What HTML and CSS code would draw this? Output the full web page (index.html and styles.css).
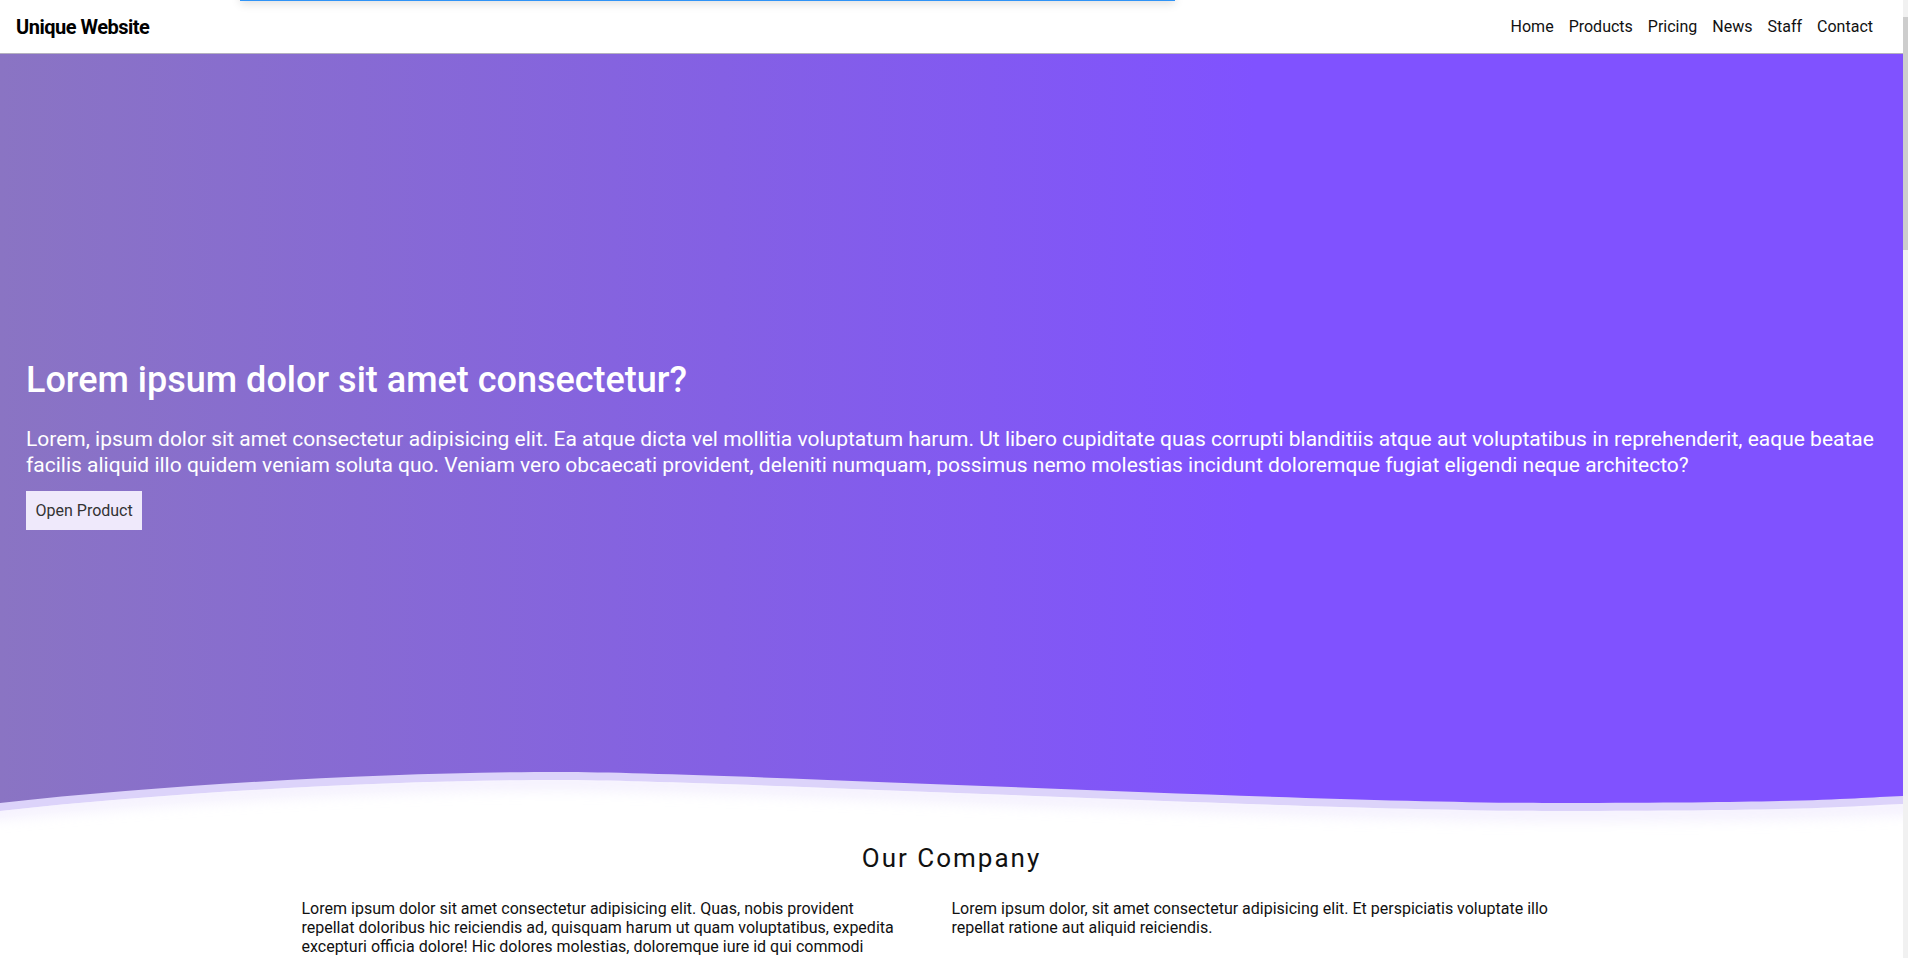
FILE: index.html
```html
<!DOCTYPE html>
<html lang="en">
<head>
<meta charset="utf-8">
<title>Unique Website</title>
<link rel="stylesheet" href="styles.css">
</head>
<body>
<div class="top-toast"></div>
<div class="fake-scrollbar"><div class="fake-thumb"></div></div>
<header class="site-header">
  <a class="logo" href="#">Unique Website</a>
  <nav class="main-nav">
    <a href="#">Home</a>
    <a href="#">Products</a>
    <a href="#">Pricing</a>
    <a href="#">News</a>
    <a href="#">Staff</a>
    <a href="#">Contact</a>
  </nav>
</header>

<section class="hero">
  <div class="hero-content">
    <h1>Lorem ipsum dolor sit amet consectetur?</h1>
    <p>Lorem, ipsum dolor sit amet consectetur adipisicing elit. Ea atque dicta vel mollitia voluptatum harum. Ut libero cupiditate quas corrupti blanditiis atque aut voluptatibus in reprehenderit, eaque beatae facilis aliquid illo quidem veniam soluta quo. Veniam vero obcaecati provident, deleniti numquam, possimus nemo molestias incidunt doloremque fugiat eligendi neque architecto?</p>
    <button class="hero-btn">Open Product</button>
  </div>
  <svg class="wave" viewBox="0 0 1903 70" preserveAspectRatio="none" aria-hidden="true">
    <defs>
      <clipPath id="belowBand">
        <path d="M0,46 C180,26 400,15 560,15 S1300,46 1560,46 S1850,41 1903,39 L1903,70 L0,70 Z"/>
      </clipPath>
      <filter id="soft" x="-5%" y="-100%" width="110%" height="300%">
        <feGaussianBlur stdDeviation="7"/>
      </filter>
    </defs>
    <path fill="#dcd3fa" d="M0,38 C180,18 400,7 560,7 S1300,38 1560,38 S1850,33 1903,31 L1903,70 L0,70 Z"/>
    <path fill="#ffffff" d="M0,46 C180,26 400,15 560,15 S1300,46 1560,46 S1850,41 1903,39 L1903,70 L0,70 Z"/>
    <g clip-path="url(#belowBand)">
      <path fill="none" stroke="#e6defc" stroke-width="14" opacity="0.5" filter="url(#soft)" d="M-20,48 C180,28 400,17 560,17 S1300,48 1560,48 S1850,43 1923,41"/>
    </g>
  </svg>
</section>

<section class="company">
  <h2>Our Company</h2>
  <div class="company-cols">
    <p>Lorem ipsum dolor sit amet consectetur adipisicing elit. Quas, nobis provident repellat doloribus hic reiciendis ad, quisquam harum ut quam voluptatibus, expedita excepturi officia dolore! Hic dolores molestias, doloremque iure id qui commodi eaque, possimus aliquid quos voluptatum.</p>
    <p>Lorem ipsum dolor, sit amet consectetur adipisicing elit. Et perspiciatis voluptate illo repellat ratione aut aliquid reiciendis.</p>
  </div>
</section>

<section class="more">
  <h2>Our Products</h2>
  <p>Lorem ipsum dolor sit amet consectetur adipisicing elit.</p>
</section>
<section class="more">
  <h2>Pricing</h2>
  <p>Lorem ipsum dolor sit amet consectetur adipisicing elit.</p>
</section>
<section class="more">
  <h2>News</h2>
  <p>Lorem ipsum dolor sit amet consectetur adipisicing elit.</p>
</section>
<section class="more last">
  <h2>Contact</h2>
  <p>Lorem ipsum dolor sit amet consectetur adipisicing elit.</p>
</section>
</body>
</html>
```
FILE: styles.css
```css
* { box-sizing: border-box; }

body {
  margin: 0 5px 0 0;
  font-family: Roboto, "Liberation Sans", Arial, sans-serif;
  color: #111;
  background: #fff;
}

.top-toast {
  position: fixed;
  top: -40px;
  left: 240px;
  width: 935px;
  height: 41px;
  background: #fff;
  border-bottom: 1px solid #2f93f6;
  box-shadow: 0 3px 9px rgba(0, 0, 0, 0.12);
  z-index: 10;
}

.fake-scrollbar {
  position: fixed;
  top: 0;
  right: 0;
  width: 5px;
  height: 100vh;
  background: #f1f1f1;
  z-index: 20;
}

.fake-thumb {
  margin-top: 17px;
  height: 233px;
  background: #cdcdcd;
}

.site-header {
  height: 54px;
  display: flex;
  align-items: center;
  justify-content: space-between;
  padding: 0 30px 0 16px;
  border-bottom: 1px solid #b4b0bf;
  background: #fff;
}

.logo {
  font-size: 20px;
  font-weight: 700;
  letter-spacing: -0.5px;
  color: #000;
  text-decoration: none;
}

.main-nav {
  display: flex;
  gap: 15px;
}

.main-nav a {
  font-size: 16px;
  color: #111;
  text-decoration: none;
}

.hero {
  position: relative;
  height: 781px;
  display: flex;
  align-items: center;
  padding: 0 26px;
  background: linear-gradient(90deg, #8a74c3 0%, #8460e4 38%, #8052ff 66%, #8052ff 100%);
  color: #fff;
}

.hero-content h1 {
  margin: 0 0 25px;
  font-size: 36px;
  font-weight: 500;
  line-height: normal;
}

.hero-content p {
  margin: 0 0 13px;
  font-size: 21px;
  line-height: 26px;
}

.hero-btn {
  font-family: inherit;
  font-size: 16px;
  line-height: normal;
  color: #333;
  background: #efe9fb;
  border: none;
  padding: 10px 9.5px;
  cursor: pointer;
}

.wave {
  position: absolute;
  left: 0;
  bottom: 0;
  width: 100%;
  height: 70px;
  display: block;
}

.company {
  max-width: 1300px;
  margin: 0 auto;
  padding-top: 8px;
  min-height: 620px;
}

.company h2,
.more h2 {
  margin: 0 0 26px;
  font-size: 26px;
  font-weight: 400;
  letter-spacing: 2px;
  text-align: center;
  line-height: normal;
}

.company-cols {
  display: grid;
  grid-template-columns: 1fr 1fr;
}

.company-cols p {
  margin: 0;
  padding-right: 50px;
  font-size: 16px;
  line-height: normal;
}

.more {
  max-width: 1300px;
  margin: 0 auto;
  min-height: 590px;
  padding-top: 40px;
}

.more p {
  text-align: center;
  font-size: 16px;
}
```
